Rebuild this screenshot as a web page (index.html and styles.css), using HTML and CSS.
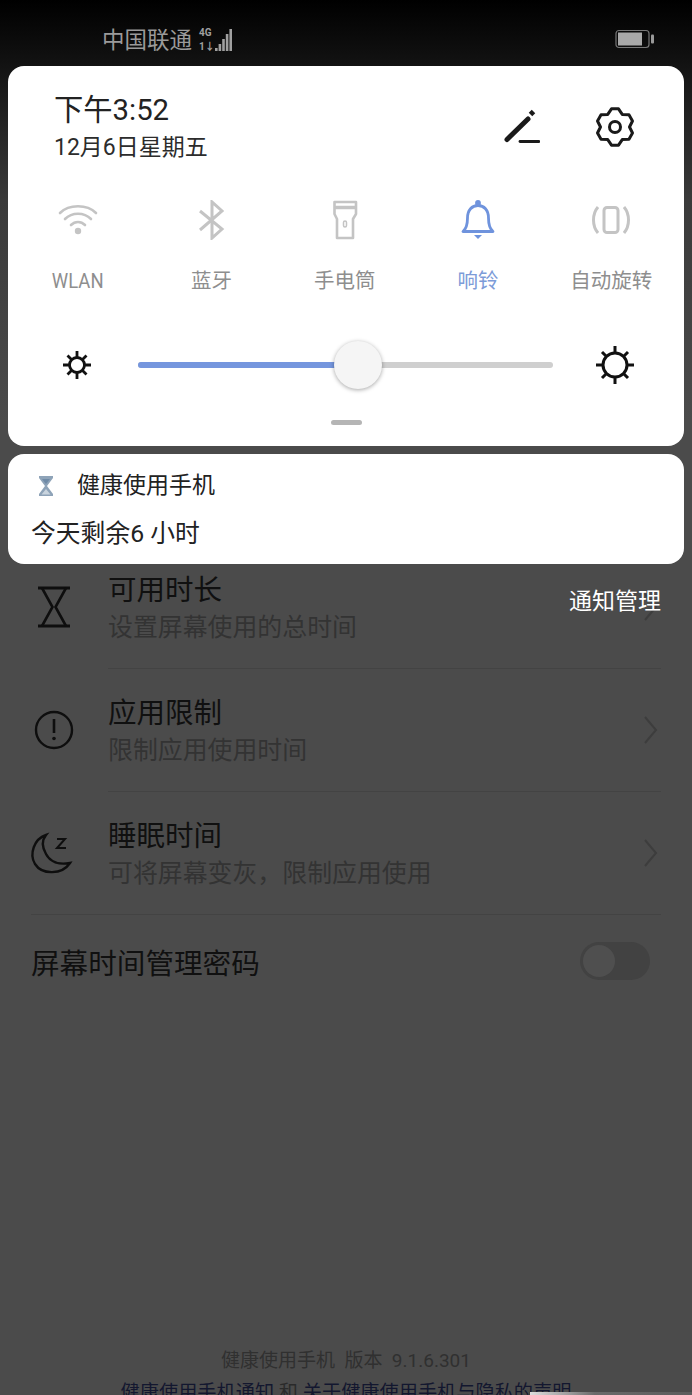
FILE: index.html
```html
<!DOCTYPE html>
<html>
	<head>
		<title>健康使用手机</title>
		<link rel="stylesheet" href="styles.css">
	</head>
	<body>
		<div class="screen">
			<div class="statusbar">
				<div class="carrier">
					<span>中国联通</span>
					<svg class="signal" width="36" height="24" viewBox="0 0 36 24">
						<text x="1" y="8" class="net">4G</text>
						<text x="1" y="22" class="net">1↓</text>
						<g fill="#a0a0a0">
							<rect x="17" y="20" width="2.600" height="3"/>
							<rect x="20.600" y="16" width="2.600" height="7"/>
							<rect x="24.200" y="11" width="2.600" height="12"/>
							<rect x="27.800" y="6" width="2.600" height="17"/>
							<rect x="31.400" y="1" width="2.600" height="22"/>
						</g>
					</svg>
				</div>
				<svg class="battery" width="40" height="20" viewBox="0 0 40 20">
					<rect x="1" y="1.500" width="33" height="17" rx="3" fill="none" stroke="#777" stroke-width="1.200"/>
					<rect x="3" y="3.500" width="24" height="13" fill="#a8a8a8"/>
					<rect x="36" y="5.500" width="3" height="9" rx="1" fill="#999"/>
				</svg>
			</div>

			<div class="panel">
				<div class="panel-top">
					<div>
						<div class="time">下午3:52</div>
						<div class="date">12月6日星期五</div>
					</div>
					<div class="top-icons">
						<svg width="38" height="36" viewBox="0 0 38 36" fill="none" stroke="#1a1a1a">
							<path d="M5 30.500 L26 10" stroke-width="5" stroke-linecap="round"/>
							<path d="M28.500 5.500 L31.500 2.500" stroke-width="5"/>
							<path d="M18 32.500 H37" stroke-width="2.800" stroke-linecap="round"/>
						</svg>
						<svg width="40" height="40" viewBox="0 0 40 40" fill="none" stroke="#1a1a1a" stroke-width="3" stroke-linejoin="round">
							<path d="M16.470 1.840 L23.530 1.840 L27.250 7.440 L33.960 7.860 L37.490 13.970 L34.500 20 L37.490 26.030 L33.960 32.140 L27.250 32.560 L23.530 38.160 L16.470 38.160 L12.750 32.560 L6.040 32.140 L2.510 26.030 L5.500 20 L2.510 13.970 L6.040 7.860 L12.750 7.440 Z"/>
							<circle cx="20" cy="20" r="5.500"/>
						</svg>
					</div>
				</div>

				<div class="toggles">
					<div class="toggle">
						<svg width="44" height="40" viewBox="0 0 44 40" fill="none" stroke="#c4c4c4" stroke-width="2.600" stroke-linecap="round">
							<path d="M4 13 C13 4 31 4 40 13"/>
							<path d="M9 19 C16 12 28 12 35 19"/>
							<path d="M15 25 C19 21 25 21 29 25"/>
							<circle cx="22" cy="31" r="3.200" fill="#c4c4c4" stroke="none"/>
						</svg>
						<span class="latin">WLAN</span>
					</div>
					<div class="toggle">
						<svg width="44" height="40" viewBox="0 0 44 40" fill="none" stroke="#c4c4c4" stroke-width="3">
							<path d="M11 11 L33 29 L23 38 V2 L33 11 L11 30"/>
						</svg>
						<span>蓝牙</span>
					</div>
					<div class="toggle">
						<svg width="44" height="40" viewBox="0 0 44 40" fill="none" stroke="#c4c4c4" stroke-width="2.600" stroke-linejoin="round">
							<path d="M11.500 2 H33 V14 L30 19 V38 H14 V19 L11.500 14 Z"/>
							<path d="M11.500 7.500 H33" stroke-width="3.500"/>
							<rect x="20.500" y="21" width="3" height="6" rx="1.500" stroke-width="1.500"/>
						</svg>
						<span>手电筒</span>
					</div>
					<div class="toggle active">
						<svg width="44" height="40" viewBox="0 0 44 40" fill="none" stroke="#6f93dd" stroke-width="2.800" stroke-linejoin="round">
							<path d="M7 31.500 H37 C33 28 32.500 24 32.500 18 C32.500 10 28 5.500 22 5.500 C16 5.500 11.500 10 11.500 18 C11.500 24 11 28 7 31.500 Z"/>
							<circle cx="22" cy="3" r="1.500" fill="#6f93dd"/>
							<path d="M18 35 H26 L22 39 Z" fill="#6f93dd" stroke="none"/>
						</svg>
						<span>响铃</span>
					</div>
					<div class="toggle">
						<svg width="44" height="40" viewBox="0 0 44 40" fill="none" stroke="#c4c4c4" stroke-width="3">
							<rect x="15" y="7.500" width="14" height="25" rx="3"/>
							<path d="M9 7 C3 14 3 26 9 33"/>
							<path d="M35 7 C41 14 41 26 35 33"/>
						</svg>
						<span>自动旋转</span>
					</div>
				</div>

				<div class="brightness">
					<svg width="30" height="30" viewBox="0 0 30 30" fill="none" stroke="#111" stroke-width="2.800">
						<circle cx="15" cy="15" r="7.500"/>
						<path d="M15 1 V7 M15 23 V29 M1 15 H7 M23 15 H29 M5.500 5.500 L9.500 9.500 M20.500 20.500 L24.500 24.500 M24.500 5.500 L20.500 9.500 M9.500 20.500 L5.500 24.500"/>
					</svg>
					<div class="slider">
						<div class="slider-fill"></div>
						<div class="slider-knob"></div>
					</div>
					<svg class="sun-big" width="40" height="40" viewBox="0 0 40 40" fill="none" stroke="#111" stroke-width="3">
						<circle cx="20" cy="20" r="12"/>
						<path d="M20 1 V8 M20 32 V39 M1 20 H8 M32 20 H39 M7 7 L11.500 11.500 M28.500 28.500 L33 33 M33 7 L28.500 11.500 M11.500 28.500 L7 33"/>
					</svg>
				</div>
				<div class="handle"></div>
			</div>

			<div class="notice">
				<div class="notice-head">
					<svg width="16" height="22" viewBox="0 0 16 22">
						<path d="M1 1 H15 V3 L9 11 L15 19 V21 H1 V19 L7 11 L1 3 Z" fill="#8ea3b8"/>
						<path d="M4 4 H12 L8 9 Z" fill="#6f8aa6"/>
						<path d="M8 14 L12.500 19.500 H3.500 Z" fill="#c9d4de"/>
					</svg>
					<span>健康使用手机</span>
				</div>
				<div class="notice-text">今天剩余6 小时</div>
			</div>

			<div class="settings">
				<div class="notice-action">通知管理</div>
				<div class="row">
					<svg class="row-icon" width="46" height="46" viewBox="0 0 46 46" fill="none" stroke="#0e0e0e" stroke-width="2.600">
						<path d="M7 4 H39 M7 42 H39" stroke-width="3"/>
						<path d="M11 4 L21.500 23 L11 42 M35 4 L24.500 23 L35 42"/>
					</svg>
					<div class="row-body">
						<div class="row-title">可用时长</div>
						<div class="row-sub">设置屏幕使用的总时间</div>
					</div>
					<svg class="chevron" width="16" height="28" viewBox="0 0 16 28" fill="none" stroke="#3d3d3d" stroke-width="2"><path d="M2 1 L13 14 L2 27"/></svg>
				</div>
				<div class="row">
					<svg class="row-icon" width="46" height="46" viewBox="0 0 46 46" fill="none" stroke="#0e0e0e" stroke-width="2.400">
						<circle cx="23" cy="23" r="18"/>
						<path d="M23 12 V26" stroke-width="2.600"/>
						<circle cx="23" cy="31.500" r="1.800" fill="#0e0e0e" stroke="none"/>
					</svg>
					<div class="row-body">
						<div class="row-title">应用限制</div>
						<div class="row-sub">限制应用使用时间</div>
					</div>
					<svg class="chevron" width="16" height="28" viewBox="0 0 16 28" fill="none" stroke="#3d3d3d" stroke-width="2"><path d="M2 1 L13 14 L2 27"/></svg>
				</div>
				<div class="row">
					<svg class="row-icon moon" width="46" height="46" viewBox="0 0 46 46" fill="none" stroke="#0e0e0e" stroke-width="2.400">
						<path d="M17 5 C5 9 0 24 6 34 C13 45 33 45 41 33 C30 35 21 32 17 24 C13 17 13 10 17 5 Z"/>
						<path d="M28 9 H36 L28 18 H37" stroke-width="2"/>
					</svg>
					<div class="row-body">
						<div class="row-title">睡眠时间</div>
						<div class="row-sub">可将屏幕变灰，限制应用使用</div>
					</div>
					<svg class="chevron" width="16" height="28" viewBox="0 0 16 28" fill="none" stroke="#3d3d3d" stroke-width="2"><path d="M2 1 L13 14 L2 27"/></svg>
				</div>
				<div class="password-row">
					<span>屏幕时间管理密码</span>
					<div class="switch"><div class="switch-knob"></div></div>
				</div>
			</div>

			<div class="footer">
				<div class="version">健康使用手机&nbsp; 版本&nbsp; 9.1.6.301</div>
				<div class="links"><span class="link">健康使用手机通知</span> 和 <span class="link">关于健康使用手机与隐私的声明</span></div>
			</div>
			<div class="watermark"></div>
		</div>
	</body>
</html>
```
FILE: styles.css
```css
* {
	box-sizing: border-box;
}

html,
body {
	margin: 0;
	padding: 0;
	background-color: #4b4b4b;
}

body {
	font-family: "Roboto", "Noto Sans CJK SC", sans-serif;
}

.screen {
	width: 692px;
	height: 1395px;
	overflow: hidden;
	position: relative;
	padding: 0 8px;
	background: linear-gradient(#000 0, #111 60px, #3a3a3a 200px, #4b4b4b 420px);
}

.statusbar {
	height: 66px;
	padding: 24px 29px 0 94px;
	display: flex;
	justify-content: space-between;
	align-items: flex-start;
}

.carrier {
	display: flex;
	align-items: center;
	gap: 6px;
	font-size: 22.500px;
	line-height: 32px;
	color: #9a9a9a;
}

.net {
	font-size: 10px;
	font-weight: 700;
	fill: #a0a0a0;
}

.battery {
	margin-top: 5px;
}

.panel {
	height: 380px;
	background-color: #fff;
	border-radius: 16px;
	padding: 26px 0 0;
}

.panel-top {
	display: flex;
	justify-content: space-between;
	padding: 0 49px 0 46px;
}

.time {
	font-size: 29.300px;
	line-height: 36px;
	color: #222;
}

.date {
	font-size: 23px;
	line-height: 34px;
	color: #2c2c2c;
	margin-top: 3px;
}

.top-icons {
	display: flex;
	align-items: center;
	gap: 55px;
	height: 72px;
	margin-top: -1px;
}

.toggles {
	display: flex;
	padding: 0 6px 0 3.500px;
	margin-top: 35px;
}

.toggle {
	flex: 1;
	display: flex;
	flex-direction: column;
	align-items: center;
	gap: 28px;
	font-size: 20.500px;
	line-height: 26px;
	color: #8e8e8e;
}

.toggle.active {
	color: #7c9bd8;
}

.latin {
	display: block;
	transform: scaleX(0.9);
}

.brightness {
	display: flex;
	align-items: center;
	padding: 0 49px 0 54px;
	margin-top: 46px;
	height: 50px;
}

.slider {
	width: 415px;
	height: 6px;
	border-radius: 3px;
	background-color: #cfcfcf;
	position: relative;
	margin-left: 46px;
}

.slider-fill {
	width: 205px;
	height: 6px;
	border-radius: 3px;
	background-color: #7596de;
}

.slider-knob {
	position: absolute;
	left: 196px;
	top: -21px;
	width: 48px;
	height: 48px;
	border-radius: 50%;
	background-color: #f5f5f5;
	box-shadow: 0 1px 4px rgba(0, 0, 0, 0.35);
}

.sun-big {
	margin-left: auto;
}

.handle {
	width: 31px;
	height: 5px;
	border-radius: 3px;
	background-color: #b5b5b5;
	margin: 30px auto 0;
}

.notice {
	height: 110px;
	margin-top: 8px;
	background-color: #fff;
	border-radius: 16px;
	padding: 17px 23px 0;
	color: #222;
	position: relative;
	z-index: 1;
}

.notice-head {
	display: flex;
	align-items: center;
	gap: 23px;
	font-size: 23px;
	line-height: 30px;
	padding-left: 7px;
}

.notice-text {
	font-size: 24.800px;
	line-height: 34px;
	margin-top: 16px;
}

/* first row starts underneath the notification card */
.settings {
	position: relative;
	margin-top: -19px;
}

.notice-action {
	position: absolute;
	right: 23px;
	top: 40px;
	font-size: 23px;
	line-height: 34px;
	color: #fff;
	z-index: 1;
}

.row {
	height: 123px;
	display: flex;
	align-items: center;
	padding: 0 23px;
	position: relative;
}

.row + .row::before {
	content: "";
	position: absolute;
	left: 100px;
	right: 23px;
	top: 0;
	height: 1px;
	background-color: #434343;
}

.row-icon {
	flex: none;
}

.moon {
	margin-left: -2px;
	margin-right: 2px;
}

.row-body {
	flex: 1;
	margin-left: 31px;
	padding-top: 4px;
}

.row-title {
	font-size: 28.500px;
	line-height: 38px;
	color: #101010;
}

.row-sub {
	font-size: 24.900px;
	line-height: 36px;
	color: #333;
}

.chevron {
	margin-right: 2px;
}

.password-row {
	height: 93px;
	margin: 0 23px;
	border-top: 1px solid #434343;
	display: flex;
	align-items: center;
	justify-content: space-between;
	font-size: 28.600px;
	color: #101010;
}

.switch {
	width: 70px;
	height: 38px;
	border-radius: 19px;
	background-color: #424242;
	padding: 3px;
	margin-right: 11px;
}

.switch-knob {
	width: 32px;
	height: 32px;
	border-radius: 50%;
	background-color: #4f4f4f;
}

.footer {
	position: absolute;
	left: 0;
	right: 0;
	top: 1347px;
	text-align: center;
}

.version {
	font-size: 19px;
	line-height: 28px;
	color: #303030;
}

.links {
	font-size: 19.200px;
	line-height: 28px;
	color: #2a2a2a;
	margin-top: 4px;
}

.link {
	color: #13172f;
}

.watermark {
	position: absolute;
	right: 0;
	bottom: 0;
	width: 162px;
	height: 3px;
	background: linear-gradient(90deg, #ddd 0, #999 25%, #6a6a6a 40%, #5c5c5c 100%);
}
```
